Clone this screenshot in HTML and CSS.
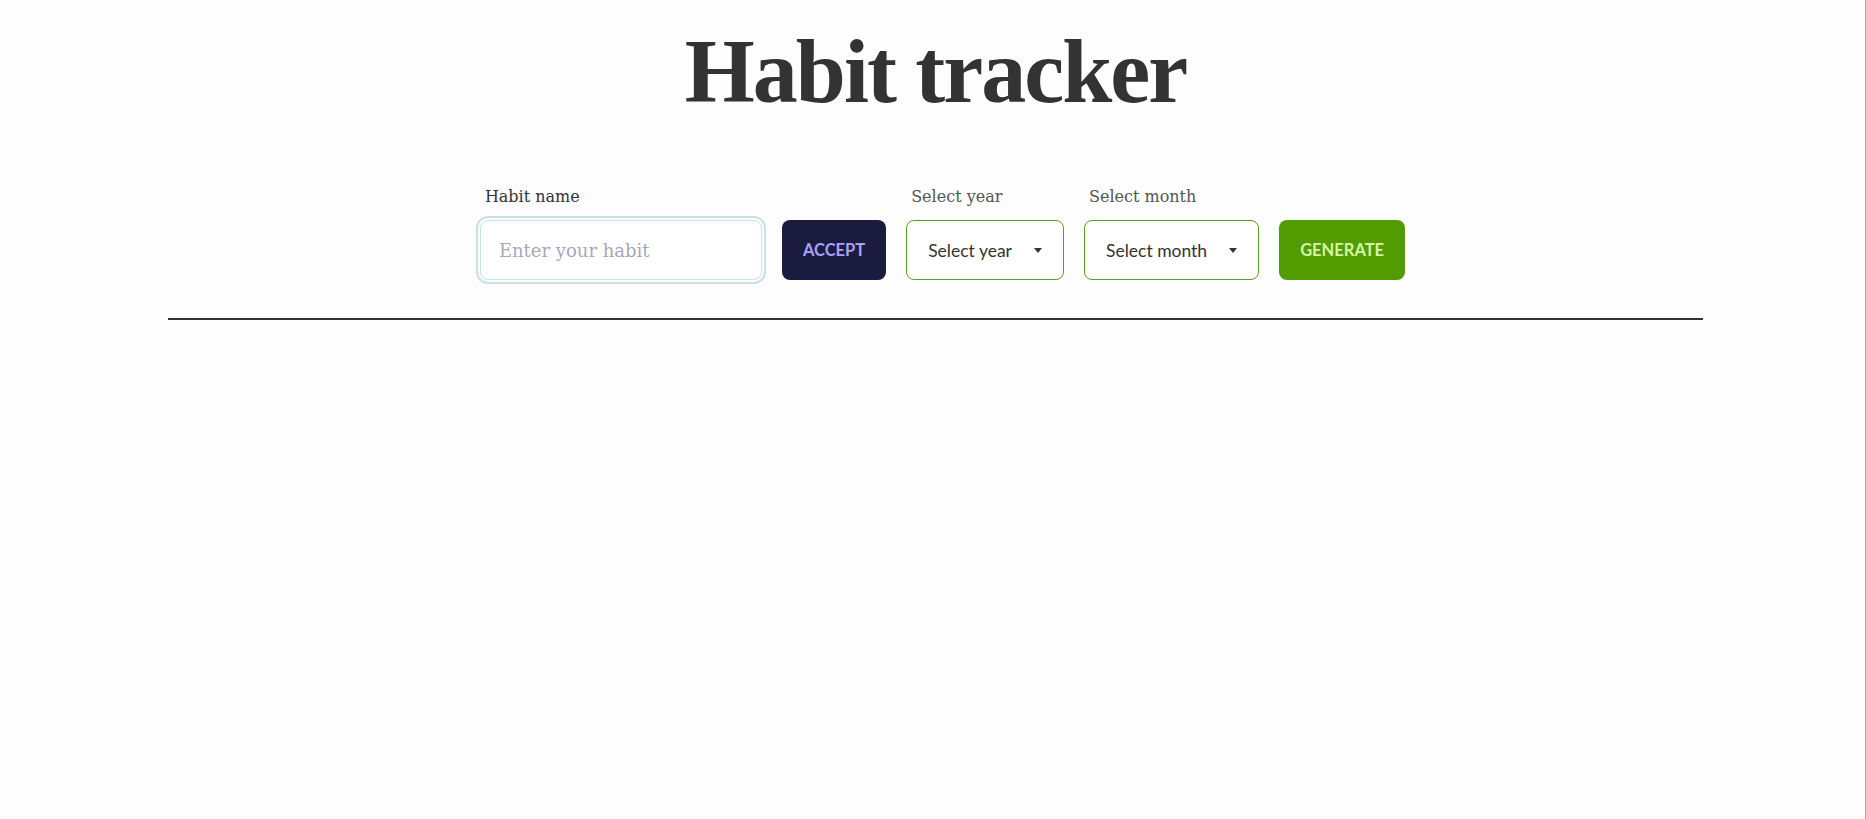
FILE: index.html
```html
<!DOCTYPE html>
<html lang="en">
<head>
<meta charset="utf-8">
<title>Habit tracker</title>
<link rel="stylesheet" href="styles.css">
</head>
<body>
<div class="page">
  <h1 class="title">Habit tracker</h1>
  <form class="controls">
    <div class="field">
      <label class="label label-dark" for="habit">Habit name</label>
      <div class="field-row">
        <input class="habit-input" id="habit" type="text" placeholder="Enter your habit">
        <button type="button" class="btn btn-accept">ACCEPT</button>
      </div>
    </div>
    <div class="field">
      <span class="label">Select year</span>
      <div class="select">
        <span class="select-text">Select year</span>
        <svg class="caret" width="8" height="5" viewBox="0 0 8 5"><path d="M0 0H8L4 5Z" fill="#333"/></svg>
      </div>
    </div>
    <div class="field">
      <span class="label">Select month</span>
      <div class="select">
        <span class="select-text">Select month</span>
        <svg class="caret" width="8" height="5" viewBox="0 0 8 5"><path d="M0 0H8L4 5Z" fill="#333"/></svg>
      </div>
    </div>
    <div class="field">
      <button type="button" class="btn btn-generate">GENERATE</button>
    </div>
  </form>
  <hr class="divider">
</div>
</body>
</html>
```
FILE: styles.css
```css
html {
  background: #fdfdfd;
  border-right: 1px solid #a8a8a8;
  min-height: 100%;
  box-sizing: border-box;
}
body {
  margin: 0;
  font-family: "Lato", "Liberation Sans", sans-serif;
  color: #333;
}
.page {
  padding: 0 162px 0 168px;
}
.title {
  margin: 0;
  padding-top: 20px;
  text-align: center;
  font-family: "Liberation Serif", serif;
  font-weight: 700;
  font-size: 90px;
  letter-spacing: -2px;
  line-height: normal;
  color: #333;
}
.controls {
  display: flex;
  justify-content: center;
  align-items: flex-end;
  gap: 20px;
  margin: 64px 0 0;
  padding-left: 14px;
}
.field {
  display: flex;
  flex-direction: column;
  align-items: flex-start;
}
.field-row {
  display: flex;
  gap: 20px;
  align-items: center;
}
.label {
  font-family: "DejaVu Serif", serif;
  font-size: 16px;
  line-height: normal;
  color: #555;
  margin: 0 0 14px 5px;
}
.label-dark {
  color: #333;
  margin-left: 5px;
}
.habit-input {
  box-sizing: border-box;
  width: 282px;
  height: 60px;
  margin: 0;
  padding: 0 18px;
  border: 1px solid #c7e1e7;
  border-radius: 8px;
  outline: 2px solid #c7e1e7;
  outline-offset: 2px;
  background: #fff;
  font-family: "DejaVu Serif", serif;
  font-size: 18px;
  color: #333;
}
.habit-input::placeholder {
  color: #a9a7b9;
}
.btn {
  box-sizing: border-box;
  height: 60px;
  margin: 0;
  padding: 0 21px;
  border: none;
  border-radius: 8px;
  font-family: "Lato", sans-serif;
  font-weight: 700;
  font-size: 16.5px;
  cursor: pointer;
}
.btn-accept {
  background: #1b1b40;
  color: #a7a3f7;
}
.btn-generate {
  background: #529b00;
  color: #d6f7a2;
  padding: 0 21px;
}
.select {
  box-sizing: border-box;
  height: 60px;
  display: flex;
  align-items: center;
  gap: 22px;
  padding: 0 21px 0 21px;
  border: 1px solid #5aa021;
  border-radius: 8px;
  background: #fff;
}
.select-text {
  font-family: "Lato", sans-serif;
  font-size: 17.5px;
  color: #333;
}
.caret {
  display: block;
}
.divider {
  margin: 38px 0 0;
  border: none;
  height: 2px;
  background: #333;
}
```
